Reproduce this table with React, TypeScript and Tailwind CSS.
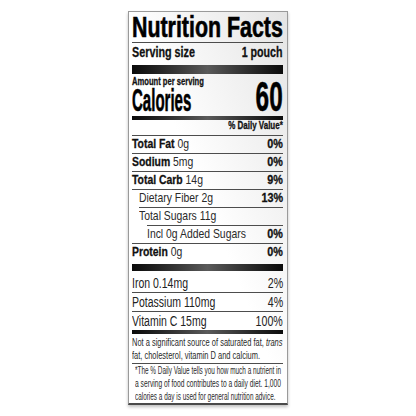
import type { ReactNode } from "react";

// condensed type: Liberation Sans squeezed per line
function Sq({ s, children }: { s: string; children: ReactNode }) {
  return <span className={`inline-block whitespace-nowrap ${s}`}>{children}</span>;
}

const nutrients = [
  { bold: "Total Fat", amt: "0g", dv: "0%", line: "", pad: "" },
  { bold: "Sodium", amt: "5mg", dv: "0%", line: "", pad: "" },
  { bold: "Total Carb", amt: "14g", dv: "9%", line: "", pad: "" },
  { plain: "Dietary Fiber 2g", dv: "13%", line: "", pad: "pl-[7px]" },
  { plain: "Total Sugars 11g", line: "ml-[7px]", pad: "" },
  { plain: "Incl 0g Added Sugars", dv: "0%", line: "ml-[15px]", pad: "" },
  { bold: "Protein", amt: "0g", dv: "0%", line: "mb-[3px]", pad: "" },
];

const minerals = [
  { name: "Iron 0.14mg", dv: "2%", line: "pt-[3px]" },
  { name: "Potassium 110mg", dv: "4%", line: "border-t border-[#4d4d4d]" },
  { name: "Vitamin C 15mg", dv: "100%", line: "border-t border-[#4d4d4d]" },
];

const bar = "bg-linear-to-r from-[#0b0b0b] via-[#5a5a5a] to-[#0b0b0b]";
const heavy = "[-webkit-text-stroke:0.6px_#000]";
const semi = "[-webkit-text-stroke:0.3px_#111]";

export default function App() {
  return (
    <div className="flex min-h-[416px] w-full justify-center bg-white pt-[11px] font-['Liberation_Sans',Arial,sans-serif] text-[#111]">
      <div className="h-[394px] w-[160px] border border-b-2 border-[#9a9a9a] border-b-[#4a4a4a] bg-linear-to-bl from-[#e4e4e4] via-white to-white pl-[3px] pr-[4px] shadow-[0_2px_3px_rgba(0,0,0,0.25)]">
        {/* header */}
        <div className={`border-b border-[#4d4d4d] text-[29px] font-bold leading-[30px] text-black ${heavy}`}>
          <Sq s="origin-left scale-x-[0.737]">Nutrition Facts</Sq>
        </div>
        <div className={`flex justify-between text-[15px] font-bold leading-[18px] ${semi}`}>
          <div className="min-w-0 flex-1">
            <Sq s="origin-left scale-x-[0.72]">Serving size</Sq>
          </div>
          <Sq s="origin-right scale-x-[0.71]">1 pouch</Sq>
        </div>
        <div className={`mt-[4px] h-[9px] ${bar}`} />

        {/* calories */}
        <div className="flex items-end justify-between pt-[2px] pb-[4px] font-bold">
          <div className="flex min-w-0 flex-1 flex-col">
            <div className={`text-[10px] leading-[12px] ${semi}`}>
              <Sq s="origin-left scale-x-[0.76]">Amount per serving</Sq>
            </div>
            <div className={`text-[32px] leading-[24px] text-black ${heavy}`}>
              <Sq s="origin-left scale-x-[0.47]">Calories</Sq>
            </div>
          </div>
          <div className={`text-[42px] leading-[30px] text-black ${heavy}`}>
            <Sq s="origin-right scale-x-[0.58]">60</Sq>
          </div>
        </div>
        <div className={`h-[4px] ${bar}`} />
        <div className={`pb-[4px] text-right text-[10.5px] font-bold leading-[11px] ${semi}`}>
          <Sq s="origin-right scale-x-[0.76]">% Daily Value*</Sq>
        </div>

        {/* nutrients */}
        {nutrients.map((n) => (
          <div
            key={n.bold ?? n.plain}
            className={`flex border-t border-[#4d4d4d] pb-[1px] text-[13px] leading-[16px] ${n.line}`}
          >
            <div className={`min-w-0 flex-1 text-[#2a2a2a] ${n.pad}`}>
              <Sq s="origin-left scale-x-[0.8]">
                {n.bold ? (
                  <>
                    <span className={`font-bold text-[#111] ${semi}`}>{n.bold}</span> {n.amt}
                  </>
                ) : (
                  n.plain
                )}
              </Sq>
            </div>
            {n.dv && (
              <span className={`shrink-0 font-bold ${semi}`}>
                <Sq s="origin-right scale-x-[0.83]">{n.dv}</Sq>
              </span>
            )}
          </div>
        ))}
        <div className={`h-[7px] ${bar}`} />

        {/* vitamins & minerals */}
        {minerals.map((m) => (
          <div key={m.name} className={`flex text-[14px] leading-[18px] text-[#222] ${m.line}`}>
            <div className="min-w-0 flex-1">
              <Sq s="origin-left scale-x-[0.75]">{m.name}</Sq>
            </div>
            <span className="shrink-0">
              <Sq s="origin-right scale-x-[0.76]">{m.dv}</Sq>
            </span>
          </div>
        ))}
        <div className={`h-[4px] ${bar}`} />

        {/* footnotes */}
        <div className="flex flex-col pt-[2px] pb-[1px] text-[11px] leading-[13px] text-[#2a2a2a]">
          <Sq s="origin-left scale-x-[0.68]">
            Not a significant source of saturated fat, <i>trans</i>
          </Sq>
          <Sq s="origin-left scale-x-[0.68]">fat, cholesterol, vitamin D and calcium.</Sq>
        </div>
        <div className="flex flex-col border-t border-[#4d4d4d] pl-[3px] text-[10px] leading-[13px] text-[#2a2a2a]">
          <Sq s="origin-left scale-x-[0.64]">*The % Daily Value tells you how much a nutrient in</Sq>
          <Sq s="origin-left scale-x-[0.67]">a serving of food contributes to a daily diet. 1,000</Sq>
          <Sq s="origin-left scale-x-[0.64]">calories a day is used for general nutrition advice.</Sq>
        </div>
      </div>
    </div>
  );
}
